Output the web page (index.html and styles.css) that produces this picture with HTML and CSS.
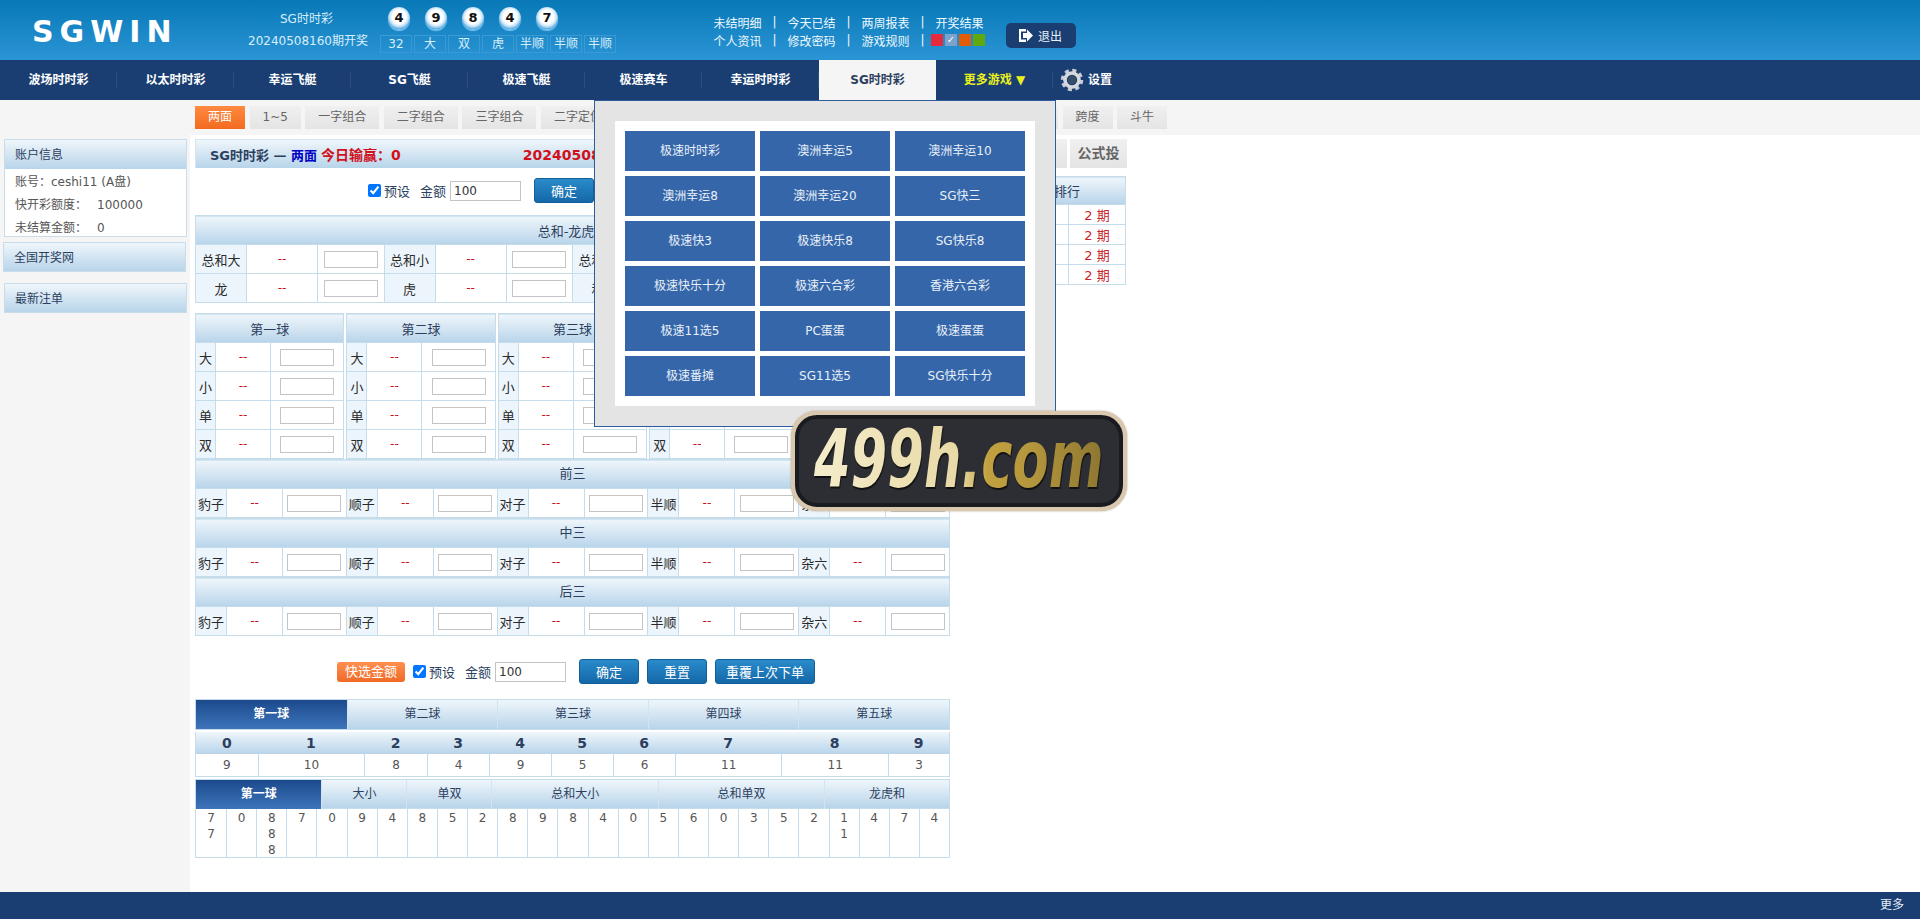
FILE: index.html
```html
<!DOCTYPE html>
<html lang="zh-CN">
<head>
    <meta charset="UTF-8">
    <meta name="viewport" content="width=device-width, initial-scale=1.0">
    <title>SG时时彩</title>
    <link rel="stylesheet" href="styles.css">
</head>
<body>
    <header class="top">
        <div class="logo">SGWIN</div>
        <div class="draw-info">
            <p>SG时时彩</p>
            <p>20240508160期开奖</p>
        </div>
        <div class="draw-result">
            <div class="balls">
                <span class="ball">4</span><span class="ball">9</span><span class="ball">8</span><span class="ball">4</span><span class="ball">7</span>
            </div>
            <div class="stats">
                <span>32</span><span>大</span><span>双</span><span>虎</span><span>半顺</span><span>半顺</span><span>半顺</span>
            </div>
        </div>
        <div class="links">
            <div class="link-row">
                <a>未结明细</a><i>|</i><a>今天已结</a><i>|</i><a>两周报表</a><i>|</i><a>开奖结果</a>
            </div>
            <div class="link-row">
                <a>个人资讯</a><i>|</i><a>修改密码</a><i>|</i><a>游戏规则</a><i>|</i>
                <span class="skins">
                    <b class="skin-red"></b><b class="skin-blue">✓</b><b class="skin-orange"></b><b class="skin-green"></b>
                </span>
            </div>
        </div>
        <button class="logout">
            <svg width="16" height="15" viewBox="0 0 16 15"><path d="M1 1h7v2.500H3v8h5V14H1z" fill="#fff"/><path d="M5 5h4V1.500l6 6-6 6V10H5z" fill="#fff"/></svg>
            退出
        </button>
    </header>

    <nav class="nav">
        <a>波场时时彩</a>
        <a>以太时时彩</a>
        <a>幸运飞艇</a>
        <a>SG飞艇</a>
        <a>极速飞艇</a>
        <a>极速赛车</a>
        <a>幸运时时彩</a>
        <a class="active">SG时时彩</a>
        <a class="more">更多游戏 ▼</a>
        <a class="setting">
            <svg width="24" height="24" viewBox="0 0 24 24"><circle cx="12" cy="12" r="9.500" fill="none" stroke="#c9ced4" stroke-width="3.500" stroke-dasharray="4 3.460"/><circle cx="12" cy="12" r="7" fill="none" stroke="#d5d9de" stroke-width="3.600"/><circle cx="12" cy="12" r="4.400" fill="#3a4d68"/></svg>
            设置
        </a>
    </nav>

    <div class="subnav">
        <a class="on">两面</a>
        <a>1~5</a>
        <a>一字组合</a>
        <a>二字组合</a>
        <a>三字组合</a>
        <a>二字定位</a>
        <a>三字定位</a>
        <a>二字和数</a>
        <a>三字和数</a>
        <a>组选三组</a>
        <a>组选六</a>
        <a class="short">跨度和</a>
        <a>跨度</a>
        <a>斗牛</a>
    </div>

    <div class="body">
        <aside class="sidebar">
            <div class="side-box">
                <h3>账户信息</h3>
                <div class="account">
                    <p>账号：ceshi11 (A盘)</p>
                    <p><span>快开彩额度：</span>100000</p>
                    <p><span>未结算金额：</span>0</p>
                </div>
            </div>
            <h3 class="side-link shift">全国开奖网</h3>
            <h3 class="side-link">最新注单</h3>
        </aside>

        <main class="main">
            <div class="title-row">
                <div class="title-bar">
                    <b>SG时时彩 — <em>两面</em></b>
                    <strong>今日输赢：0</strong>
                    <strong class="period">20240508161期</strong>
                </div>
                <a class="title-tab">快捷</a>
                <a class="title-tab">自选</a>
                <a class="title-tab">公式投</a>
            </div>

            <div class="columns">
                <div class="bets">
                    <div class="preset first">
                        <label><input type="checkbox" checked> 预设</label>
                        <span>金额</span>
                        <input class="amount" type="text" value="100">
                        <button class="btn">确定</button>
                        <button class="btn">重置</button>
                        <button class="btn">重覆上次下单</button>
                    </div>

                    <table class="bet-table total">
                        <colgroup>
                            <col class="c-lab"><col class="c-odds"><col>
                            <col class="c-lab"><col class="c-odds"><col>
                            <col class="c-lab"><col class="c-odds"><col>
                            <col class="c-lab"><col class="c-odds"><col>
                        </colgroup>
                        <tr><th colspan="12">总和-龙虎和</th></tr>
                        <tr>
                            <td class="lab">总和大</td><td class="odds">--</td><td><input></td>
                            <td class="lab">总和小</td><td class="odds">--</td><td><input></td>
                            <td class="lab">总和单</td><td class="odds">--</td><td><input></td>
                            <td class="lab">总和双</td><td class="odds">--</td><td><input></td>
                        </tr>
                        <tr>
                            <td class="lab">龙</td><td class="odds">--</td><td><input></td>
                            <td class="lab">虎</td><td class="odds">--</td><td><input></td>
                            <td class="lab">和</td><td class="odds">--</td><td><input></td>
                            <td class="lab"></td><td></td><td></td>
                        </tr>
                    </table>

                    <div class="ball-tables">
                        <table class="bet-table ball-table">
                            <colgroup><col class="c-lab"><col class="c-odds"><col></colgroup>
                            <tr><th colspan="3">第一球</th></tr>
                            <tr><td class="lab">大</td><td class="odds">--</td><td><input></td></tr>
                            <tr><td class="lab">小</td><td class="odds">--</td><td><input></td></tr>
                            <tr><td class="lab">单</td><td class="odds">--</td><td><input></td></tr>
                            <tr><td class="lab">双</td><td class="odds">--</td><td><input></td></tr>
                        </table>
                        <table class="bet-table ball-table">
                            <colgroup><col class="c-lab"><col class="c-odds"><col></colgroup>
                            <tr><th colspan="3">第二球</th></tr>
                            <tr><td class="lab">大</td><td class="odds">--</td><td><input></td></tr>
                            <tr><td class="lab">小</td><td class="odds">--</td><td><input></td></tr>
                            <tr><td class="lab">单</td><td class="odds">--</td><td><input></td></tr>
                            <tr><td class="lab">双</td><td class="odds">--</td><td><input></td></tr>
                        </table>
                        <table class="bet-table ball-table">
                            <colgroup><col class="c-lab"><col class="c-odds"><col></colgroup>
                            <tr><th colspan="3">第三球</th></tr>
                            <tr><td class="lab">大</td><td class="odds">--</td><td><input></td></tr>
                            <tr><td class="lab">小</td><td class="odds">--</td><td><input></td></tr>
                            <tr><td class="lab">单</td><td class="odds">--</td><td><input></td></tr>
                            <tr><td class="lab">双</td><td class="odds">--</td><td><input></td></tr>
                        </table>
                        <table class="bet-table ball-table">
                            <colgroup><col class="c-lab"><col class="c-odds"><col></colgroup>
                            <tr><th colspan="3">第四球</th></tr>
                            <tr><td class="lab">大</td><td class="odds">--</td><td><input></td></tr>
                            <tr><td class="lab">小</td><td class="odds">--</td><td><input></td></tr>
                            <tr><td class="lab">单</td><td class="odds">--</td><td><input></td></tr>
                            <tr><td class="lab">双</td><td class="odds">--</td><td><input></td></tr>
                        </table>
                        <table class="bet-table ball-table">
                            <colgroup><col class="c-lab"><col class="c-odds"><col></colgroup>
                            <tr><th colspan="3">第五球</th></tr>
                            <tr><td class="lab">大</td><td class="odds">--</td><td><input></td></tr>
                            <tr><td class="lab">小</td><td class="odds">--</td><td><input></td></tr>
                            <tr><td class="lab">单</td><td class="odds">--</td><td><input></td></tr>
                            <tr><td class="lab">双</td><td class="odds">--</td><td><input></td></tr>
                        </table>
                    </div>

                    <table class="bet-table trio">
                        <colgroup>
                            <col class="c-lab"><col class="c-odds"><col>
                            <col class="c-lab"><col class="c-odds"><col>
                            <col class="c-lab"><col class="c-odds"><col>
                            <col class="c-lab"><col class="c-odds"><col>
                            <col class="c-lab"><col class="c-odds"><col>
                        </colgroup>
                        <tr><th colspan="15">前三</th></tr>
                        <tr>
                            <td class="lab">豹子</td><td class="odds">--</td><td><input></td>
                            <td class="lab">顺子</td><td class="odds">--</td><td><input></td>
                            <td class="lab">对子</td><td class="odds">--</td><td><input></td>
                            <td class="lab">半顺</td><td class="odds">--</td><td><input></td>
                            <td class="lab">杂六</td><td class="odds">--</td><td><input></td>
                        </tr>
                    </table>
                    <table class="bet-table trio">
                        <colgroup>
                            <col class="c-lab"><col class="c-odds"><col>
                            <col class="c-lab"><col class="c-odds"><col>
                            <col class="c-lab"><col class="c-odds"><col>
                            <col class="c-lab"><col class="c-odds"><col>
                            <col class="c-lab"><col class="c-odds"><col>
                        </colgroup>
                        <tr><th colspan="15">中三</th></tr>
                        <tr>
                            <td class="lab">豹子</td><td class="odds">--</td><td><input></td>
                            <td class="lab">顺子</td><td class="odds">--</td><td><input></td>
                            <td class="lab">对子</td><td class="odds">--</td><td><input></td>
                            <td class="lab">半顺</td><td class="odds">--</td><td><input></td>
                            <td class="lab">杂六</td><td class="odds">--</td><td><input></td>
                        </tr>
                    </table>
                    <table class="bet-table trio">
                        <colgroup>
                            <col class="c-lab"><col class="c-odds"><col>
                            <col class="c-lab"><col class="c-odds"><col>
                            <col class="c-lab"><col class="c-odds"><col>
                            <col class="c-lab"><col class="c-odds"><col>
                            <col class="c-lab"><col class="c-odds"><col>
                        </colgroup>
                        <tr><th colspan="15">后三</th></tr>
                        <tr>
                            <td class="lab">豹子</td><td class="odds">--</td><td><input></td>
                            <td class="lab">顺子</td><td class="odds">--</td><td><input></td>
                            <td class="lab">对子</td><td class="odds">--</td><td><input></td>
                            <td class="lab">半顺</td><td class="odds">--</td><td><input></td>
                            <td class="lab">杂六</td><td class="odds">--</td><td><input></td>
                        </tr>
                    </table>

                    <div class="preset second">
                        <a class="quick">快选金额</a>
                        <label><input type="checkbox" checked> 预设</label>
                        <span>金额</span>
                        <input class="amount" type="text" value="100">
                        <button class="btn">确定</button>
                        <button class="btn">重置</button>
                        <button class="btn">重覆上次下单</button>
                    </div>

                    <div class="ball-tabs">
                        <a class="on">第一球</a><a>第二球</a><a>第三球</a><a>第四球</a><a>第五球</a>
                    </div>
                    <div class="digit-grid">
                        <b>0</b><b>1</b><b>2</b><b>3</b><b>4</b><b>5</b><b>6</b><b>7</b><b>8</b><b>9</b>
                        <span>9</span><span>10</span><span>8</span><span>4</span><span>9</span><span>5</span><span>6</span><span>11</span><span>11</span><span>3</span>
                    </div>
                    <div class="road-tabs">
                        <a class="on">第一球</a><a>大小</a><a>单双</a><a>总和大小</a><a>总和单双</a><a>龙虎和</a>
                    </div>
                    <div class="road">
                        <span>7<br>7</span><span>0</span><span>8<br>8<br>8</span><span>7</span><span>0</span>
                        <span>9</span><span>4</span><span>8</span><span>5</span><span>2</span>
                        <span>8</span><span>9</span><span>8</span><span>4</span><span>0</span>
                        <span>5</span><span>6</span><span>0</span><span>3</span><span>5</span>
                        <span>2</span><span>1<br>1</span><span>4</span><span>7</span><span>4</span>
                    </div>
                </div>

                <table class="rank">
                    <colgroup><col><col class="c-qty"></colgroup>
                    <tr><th colspan="2">两面长龙排行</th></tr>
                    <tr><td>第一球-大</td><td class="qty">2 期</td></tr>
                    <tr><td>第二球-单</td><td class="qty">2 期</td></tr>
                    <tr><td>第四球-小</td><td class="qty">2 期</td></tr>
                    <tr><td>总和-双</td><td class="qty">2 期</td></tr>
                </table>
            </div>
        </main>

        <div class="game-menu">
            <div class="game-list">
                <a>极速时时彩</a><a>澳洲幸运5</a><a>澳洲幸运10</a>
                <a>澳洲幸运8</a><a>澳洲幸运20</a><a>SG快三</a>
                <a>极速快3</a><a>极速快乐8</a><a>SG快乐8</a>
                <a>极速快乐十分</a><a>极速六合彩</a><a>香港六合彩</a>
                <a>极速11选5</a><a>PC蛋蛋</a><a>极速蛋蛋</a>
                <a>极速番摊</a><a>SG11选5</a><a>SG快乐十分</a>
            </div>
        </div>

        <div class="badge"><span>499h.com</span></div>
    </div>

    <footer class="footer"><a>更多</a></footer>
</body>
</html>
```

FILE: styles.css
```css
* {
    box-sizing: border-box;
}
html, body {
    margin: 0;
    height: 100%;
}
body {
    font-family: "DejaVu Sans", "Noto Sans CJK SC", sans-serif;
    font-size: 12px;
    color: #444;
    background: #fff;
    display: flex;
    flex-direction: column;
    overflow: hidden;
}
p {
    margin: 0;
}

/* top bar */
.top {
    height: 60px;
    flex: none;
    display: flex;
    background: linear-gradient(#0878b6, #2b95d6);
    color: #d9eefa;
}
.logo {
    width: 248px;
    padding: 14px 0 0 32px;
    font-size: 30px;
    font-weight: bold;
    letter-spacing: 6px;
    color: #fff;
    line-height: 36px;
}
.draw-info {
    width: 132px;
    padding-top: 8px;
    line-height: 22px;
}
.draw-info p:first-child {
    padding-left: 32px;
}
.draw-result {
    width: 333px;
}
.balls {
    display: flex;
    gap: 15px;
    padding: 7px 0 0 8px;
}
.ball {
    width: 22px;
    height: 22px;
    border-radius: 50%;
    background: radial-gradient(circle at 50% 45%, #fff 0 42%, #cfe8f8 56%, #4fa3dc 78%, #1e7fc0 100%);
    box-shadow: 0 2px 1px rgba(140, 210, 250, 0.8);
    color: #111;
    font-weight: bold;
    font-size: 13px;
    line-height: 22px;
    text-align: center;
}
.stats {
    display: flex;
    gap: 2px;
    margin-top: 6px;
}
.stats span {
    width: 32px;
    height: 18px;
    border: 1px solid #3a9ad4;
    text-align: center;
    line-height: 16px;
}
.links {
    width: 293px;
    padding-top: 13px;
    color: #eef8fd;
}
.link-row {
    display: flex;
    align-items: center;
    height: 18px;
}
.link-row a {
    width: 49px;
    text-align: center;
}
.link-row i {
    width: 25px;
    text-align: center;
    font-style: normal;
}
.skins {
    display: flex;
    gap: 2px;
    margin-left: -4px;
}
.skins b {
    width: 12px;
    height: 12px;
    font-size: 10px;
    line-height: 12px;
    font-weight: normal;
    text-align: center;
    color: #fff;
}
.skin-red { background: #e62a3c; }
.skin-blue { background: #7ba2cc; }
.skin-orange { background: #e25d06; }
.skin-green { background: #5fa80e; }
.logout {
    width: 70px;
    height: 25px;
    margin-top: 23px;
    display: flex;
    align-items: center;
    gap: 4px;
    padding: 0 0 0 12px;
    border: 0;
    border-radius: 5px;
    background: #1a3e72;
    color: #e6f1f8;
    font: inherit;
}

/* game nav */
.nav {
    height: 40px;
    flex: none;
    display: flex;
    background: #1a3e72;
    color: #fff;
    font-weight: bold;
}
.nav a {
    width: 117px;
    line-height: 40px;
    text-align: center;
    background: linear-gradient(#2c4f80, #2c4f80) right 12px / 1px 16px no-repeat;
}
.nav a.active {
    background: #f5f5f5;
    color: #2c3f5e;
}
.nav a.more {
    color: #e9f01c;
}
.nav a.setting {
    display: flex;
    align-items: center;
    gap: 4px;
    padding-left: 7px;
    background: none;
}

/* play type tabs */
.subnav {
    height: 35px;
    flex: none;
    display: flex;
    gap: 4.500px;
    padding: 6px 0 0 195px;
    background: #f5f5f5;
}
.subnav a {
    height: 23px;
    padding: 0 13px;
    line-height: 23px;
    color: #666;
    background: linear-gradient(#f0f0f0, #e4e4e4);
}
.subnav a.short {
    padding: 0 11px;
}
.subnav a.on {
    color: #fff;
    background: linear-gradient(#ff8a40, #f26a20);
}

/* page body */
.body {
    flex: 1;
    min-height: 0;
    display: flex;
    position: relative;
}
.sidebar {
    width: 190px;
    flex: none;
    padding: 4px 3px 0 4px;
    background: #f5f5f5;
}
.side-box {
    border: 1px solid #c9dcea;
    background: #fff;
    height: 98px;
}
.sidebar h3 {
    margin: 0;
    height: 29px;
    padding-left: 10px;
    font-size: 12px;
    font-weight: normal;
    line-height: 30px;
    color: #2c3f5e;
    background: linear-gradient(#eff6fb, #b8d4ea);
}
.side-link {
    margin-top: 11px !important;
    border: 1px solid #c9dcea;
    height: 30px !important;
}
.side-link.shift {
    margin: 5px 1px 0 -1px !important;
}
.account {
    padding: 2px 10px;
    color: #555;
}
.account p {
    height: 23px;
    line-height: 23px;
}
.account span {
    display: inline-block;
    width: 82px;
}

.main {
    flex: 1;
    padding: 4px 0 0 5px;
}
.title-row {
    display: flex;
    height: 29px;
}
.title-bar {
    width: 755px;
    flex: none;
    padding-left: 14px;
    display: flex;
    align-items: center;
    font-size: 13px;
    color: #2c3f5e;
    background: linear-gradient(#eff6fb, #b8d4ea);
    border: 1px solid #d6e6f1;
    border-bottom: 0;
}
.title-bar em {
    font-style: normal;
    color: #0000c8;
}
.title-bar strong {
    margin-left: 4px;
    font-size: 14px;
    color: #d0111b;
}
.title-bar .period {
    margin-left: 122px;
}
.title-tab {
    margin-left: 3px;
    width: 55px;
    font-size: 14px;
    font-weight: bold;
    line-height: 29px;
    text-align: center;
    color: #666;
    background: linear-gradient(#f0f0f0, #e4e4e4);
}
.title-tab:first-of-type {
    margin-left: 4px;
}
.title-tab:last-child {
    width: 57px;
}

.columns {
    display: flex;
    align-items: flex-start;
}
.bets {
    width: 755px;
    flex: none;
}

/* amount row */
.preset {
    display: flex;
    align-items: center;
    height: 25px;
    font-size: 13px;
    color: #2c3f5e;
}
.preset.first {
    margin: 10px 0 12px;
    padding-left: 173px;
}
.preset.second {
    margin: 23px 0 15px;
    padding-left: 142px;
}
.preset label {
    display: flex;
    align-items: center;
    gap: 3px;
    margin-right: 10px;
}
.preset label input {
    margin: 0;
}
.amount {
    width: 71px;
    height: 20px;
    margin: 0 13px 0 4px;
    padding: 0 3px;
    border: 1px solid #c4c4c4;
    font-size: 12px;
    font-family: inherit;
    color: #333;
}
.btn {
    height: 25px;
    min-width: 60px;
    margin-right: 8px;
    padding: 0 10px;
    border: 1px solid #125f99;
    border-radius: 3px;
    background: linear-gradient(#2a8bcb, #1468a8);
    color: #fff;
    font: inherit;
}
.quick {
    width: 68px;
    height: 20px;
    margin-right: 8px;
    border-radius: 3px;
    text-align: center;
    line-height: 20px;
    color: #fff;
    background: linear-gradient(#ff9050, #f06a26);
}

/* bet tables */
.bet-table {
    width: 100%;
    table-layout: fixed;
    border-collapse: collapse;
}
.bet-table th {
    height: 29px;
    padding: 0;
    font-size: 13px;
    font-weight: normal;
    color: #2c3f5e;
    background: linear-gradient(#eff6fb, #b8d4ea);
    border: 1px solid #c5dcea;
}
.bet-table td {
    height: 29px;
    padding: 0;
    text-align: center;
    border: 1px solid #c5dcea;
}
.bet-table td.lab {
    background: #edf5fc;
    color: #2a2a2a;
    font-size: 13px;
}
.bet-table td.odds {
    color: #c8141c;
}
.bet-table input {
    display: block;
    width: 54px;
    height: 17px;
    margin: 0 auto;
    padding: 0;
    border: 1px solid #c4c4c4;
}
.total {
    margin-bottom: 10px;
}
.total .c-lab {
    width: 51px;
}
.total .c-odds {
    width: 71px;
}
.ball-tables {
    display: grid;
    grid-template-columns: repeat(5, 1fr);
    gap: 2px;
}
.ball-table .c-lab {
    width: 20px;
}
.ball-table .c-odds {
    width: 55px;
}
.trio th {
    padding-bottom: 3px;
}
.trio .c-lab {
    width: 31px;
}
.trio .c-odds {
    width: 56px;
}

/* stats below the bets */
.ball-tabs, .road-tabs {
    display: grid;
    border: 1px solid #c5dcea;
    background: linear-gradient(#eff6fb, #b8d4ea);
    text-align: center;
    line-height: 29px;
    color: #2c3f5e;
}
.ball-tabs {
    height: 31px;
    grid-template-columns: repeat(5, 1fr);
}
.road-tabs {
    height: 30px;
    grid-template-columns: 125.400px 85px 85px 166.600px 166.200px 1fr;
}
.ball-tabs a + a, .road-tabs a + a {
    border-left: 1px solid #d3e4ef;
}
.ball-tabs .on, .road-tabs .on {
    color: #fff;
    font-weight: bold;
    background: linear-gradient(#1b4a8c, #3d74ba);
}
.digit-grid {
    display: grid;
    grid-template-columns: 61.600px 106.600px 63px 62px 62px 62px 62px 106px 107px 1fr;
    margin: 2px 0;
    border-left: 1px solid #c5dcea;
    border-right: 1px solid #c5dcea;
    border-bottom: 1px solid #c5dcea;
    text-align: center;
}
.digit-grid b {
    height: 22px;
    line-height: 22px;
    font-size: 14px;
    color: #2c3f5e;
    background: linear-gradient(#eff6fb, #b8d4ea);
}
.digit-grid span {
    height: 22px;
    line-height: 22px;
    color: #555;
}
.digit-grid span + span {
    border-left: 1px solid #c5dcea;
}
.road {
    display: grid;
    grid-template-columns: repeat(25, 1fr);
    height: 49px;
    border: 1px solid #c5dcea;
    border-top: 0;
    text-align: center;
    line-height: 16px;
    color: #555;
}
.road span {
    padding-top: 1px;
}
.road span + span {
    border-left: 1px solid #c5dcea;
}

/* long run table */
.rank {
    width: 170px;
    margin: 8px 0 0 6px;
    border-collapse: collapse;
    table-layout: fixed;
}
.rank .c-qty {
    width: 57px;
}
.rank th {
    height: 28px;
    padding: 0;
    font-size: 13px;
    font-weight: normal;
    color: #2c3f5e;
    background: linear-gradient(#eff6fb, #b8d4ea);
    border: 1px solid #c5dcea;
}
.rank td {
    height: 20px;
    padding: 0;
    text-align: center;
    border: 1px solid #c5dcea;
}
.rank .qty {
    font-size: 13px;
    color: #c8232c;
}

/* more games dropdown */
.game-menu {
    position: absolute;
    left: 594px;
    top: -35px;
    width: 462px;
    height: 327px;
    padding: 20px 20px 20px;
    background: #e4e4e4;
    border: 1px solid #2f5c9c;
}
.game-list {
    display: grid;
    grid-template-columns: repeat(3, 130px);
    grid-auto-rows: 40px;
    gap: 5px;
    height: 285px;
    padding: 10px;
    background: #fff;
}
.game-list a {
    background: #3466a9;
    color: #e9f0f8;
    text-align: center;
    line-height: 40px;
}

/* floating ad */
.badge {
    position: absolute;
    left: 791px;
    top: 276px;
    width: 336px;
    height: 100px;
    border-radius: 26px;
    border: 4px solid #d9c7ae;
    background: #2c2e33;
    box-shadow: inset 0 0 0 4px #1a1b1e, 0 0 2px #a89880;
    text-align: center;
    overflow: hidden;
}
.badge span {
    display: inline-block;
    font-family: "DejaVu Sans", sans-serif;
    font-size: 81px;
    font-weight: bold;
    font-style: italic;
    line-height: 88px;
    transform: scaleX(0.65);
    background: linear-gradient(90deg, #f4eccb 0%, #e8d9a6 50%, #c2a13f 60%, #b4963c 75%, #8c7631 100%);
    -webkit-background-clip: text;
    background-clip: text;
    color: transparent;
    filter: drop-shadow(1px 2px 0 #111);
    margin: 0 -80px;
    white-space: nowrap;
}

.footer {
    height: 27px;
    flex: none;
    padding-right: 16px;
    background: #1a3e72;
    color: #e6eef6;
    text-align: right;
    line-height: 27px;
}
```
